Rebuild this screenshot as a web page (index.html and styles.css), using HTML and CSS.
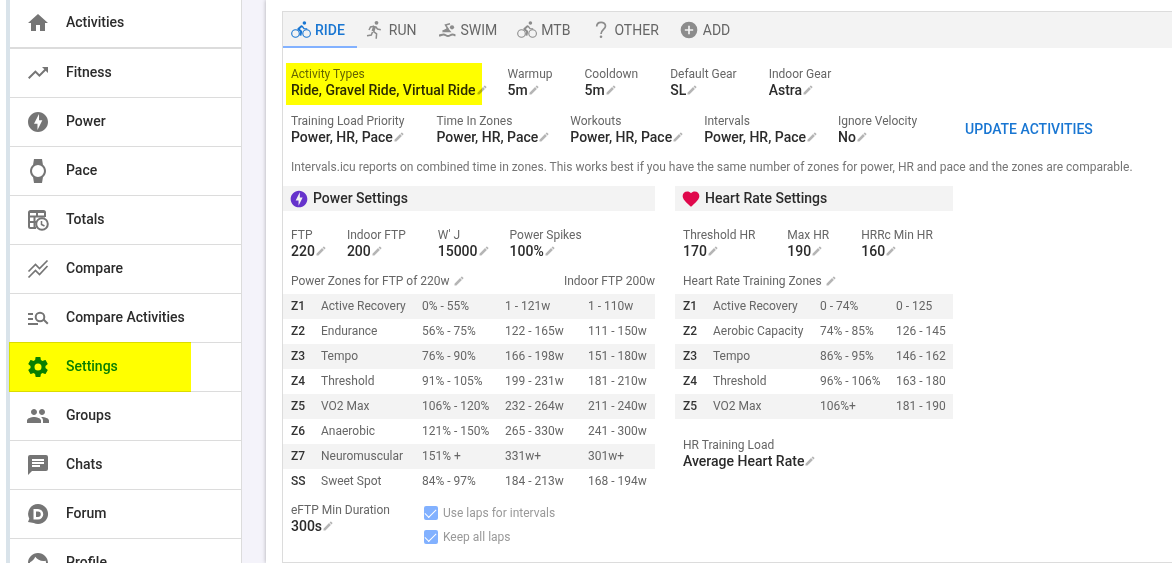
FILE: index.html
```html
<!DOCTYPE html>
<html lang="en">
<head>
<meta charset="utf-8">
<title>Settings</title>
<link rel="stylesheet" href="styles.css">
</head>
<body>
<svg class="sprite" aria-hidden="true">
  <symbol id="pencil" viewBox="0 0 24 24"><path d="M3,17.25V21H6.75L17.81,9.93L14.06,6.18L3,17.25M20.71,7.04C21.1,6.65 21.1,6 20.71,5.63L18.37,3.29C18,2.9 17.35,2.9 16.96,3.29L15.12,5.12L18.87,8.87L20.71,7.04Z"/></symbol>
  <symbol id="bolt" viewBox="0 0 24 24"><path d="M12 2C6.48 2 2 6.48 2 12s4.48 10 10 10 10-4.48 10-10S17.52 2 12 2zM11.48 20v-6.26H8L13 4v6.26h3.35z"/></symbol>
  <symbol id="bike" viewBox="0 0 20 20"><g fill="none" stroke="currentColor"><circle cx="4.5" cy="13.5" r="3.8" stroke-width="1.1"/><circle cx="15.6" cy="13.5" r="3.8" stroke-width="1.1"/><path d="M11 5.8 7.3 9l2.900 2.600-.8 4" stroke-width="2" stroke-linejoin="round"/><path d="M11 6l2 2.600 3.200.2" stroke-width="1.3"/></g><circle cx="13.4" cy="3" r="1.8"/></symbol>
</svg>
<div class="app">
  <nav class="sidebar" aria-label="Main">
    <a class="nav first" href="#"><svg class="nav-icon" viewBox="0 0 24 24"><path d="M10,20V14H14V20H19V12H22L12,3L2,12H5V20H10Z"/></svg>Activities</a>
    <a class="nav" href="#"><svg class="nav-icon" viewBox="0 0 24 24"><path d="M16,6L18.29,8.29L13.41,13.17L9.41,9.17L2,16.59L3.41,18L9.41,12L13.41,16L19.71,9.71L22,12V6H16Z"/></svg>Fitness</a>
    <a class="nav" href="#"><svg class="nav-icon"><use href="#bolt"/></svg>Power</a>
    <a class="nav" href="#"><svg class="nav-icon" viewBox="0 0 24 24"><path d="M6,12A6,6 0 0,1 12,6A6,6 0 0,1 18,12A6,6 0 0,1 12,18A6,6 0 0,1 6,12M20,12C20,9.45 18.81,7.19 16.95,5.73L16,0H8L7.05,5.73C5.19,7.19 4,9.45 4,12C4,14.54 5.19,16.81 7.05,18.27L8,24H16L16.95,18.27C18.81,16.81 20,14.54 20,12Z"/></svg>Pace</a>
    <a class="nav" href="#"><svg class="nav-icon line" viewBox="0 0 24 24"><path d="M10 20H4.5A1.5 1.5 0 0 1 3 18.500V4.500A1.500 1.500 0 0 1 4.500 3h13A1.500 1.500 0 0 1 19 4.500V9M3 4h16M3 8.500h16M3 14h7M8.500 8.500V20M11 4v5"/><circle cx="16" cy="16" r="5.800"/><path d="M15.500 13v3.500l3 1.500" stroke-width="1.500"/></svg>Totals</a>
    <a class="nav" href="#"><svg class="nav-icon line" viewBox="0 0 24 24"><path d="M2.500 14.500 9.500 7.500l4 4L21.500 3.500M2.500 20.500l7-7 4 4 8-8.500" stroke-width="1.700"/></svg>Compare</a>
    <a class="nav" href="#"><svg class="nav-icon line" viewBox="0 0 24 24"><path d="M2 8h5M2 13h5M2 18h10M17.500 13.500l4.300 4.300"/><circle cx="14" cy="11" r="4.300"/></svg>Compare Activities</a>
    <a class="nav active" href="#" aria-current="page"><svg class="nav-icon" viewBox="0 0 24 24"><path d="M12,15.5A3.5,3.5 0 0,1 8.5,12A3.5,3.5 0 0,1 12,8.5A3.5,3.5 0 0,1 15.5,12A3.5,3.5 0 0,1 12,15.5M19.43,12.97C19.47,12.65 19.5,12.33 19.5,12C19.5,11.67 19.47,11.34 19.43,11L21.54,9.37C21.73,9.22 21.78,8.95 21.66,8.73L19.66,5.27C19.54,5.05 19.27,4.96 19.05,5.05L16.56,6.05C16.04,5.66 15.5,5.32 14.87,5.07L14.5,2.42C14.46,2.18 14.25,2 14,2H10C9.75,2 9.54,2.18 9.5,2.42L9.13,5.07C8.5,5.32 7.96,5.66 7.44,6.05L4.95,5.05C4.73,4.96 4.46,5.05 4.34,5.27L2.34,8.73C2.21,8.95 2.27,9.22 2.46,9.37L4.57,11C4.53,11.34 4.5,11.67 4.5,12C4.5,12.33 4.53,12.65 4.57,12.97L2.46,14.63C2.27,14.78 2.21,15.05 2.34,15.27L4.34,18.73C4.46,18.95 4.73,19.03 4.95,18.95L7.44,17.94C7.96,18.34 8.5,18.68 9.13,18.93L9.5,21.58C9.54,21.82 9.75,22 10,22H14C14.25,22 14.46,21.82 14.5,21.58L14.87,18.93C15.5,18.67 16.04,18.34 16.56,17.94L19.05,18.95C19.27,19.03 19.54,18.95 19.66,18.73L21.66,15.27C21.78,15.05 21.73,14.78 21.54,14.63L19.43,12.97Z"/></svg>Settings</a>
    <a class="nav" href="#"><svg class="nav-icon" viewBox="0 0 24 24"><path d="M16 11c1.66 0 2.99-1.34 2.99-3S17.66 5 16 5c-1.66 0-3 1.34-3 3s1.34 3 3 3zm-8 0c1.66 0 2.99-1.34 2.99-3S9.66 5 8 5C6.34 5 5 6.34 5 8s1.34 3 3 3zm0 2c-2.33 0-7 1.17-7 3.500V19h14v-2.500c0-2.330-4.670-3.500-7-3.500zm8 0c-.29 0-.62.02-.97.05 1.160.84 1.970 1.970 1.970 3.450V19h6v-2.500c0-2.330-4.670-3.500-7-3.500z"/></svg>Groups</a>
    <a class="nav" href="#"><svg class="nav-icon" viewBox="0 0 24 24"><path d="M20 2H4a2 2 0 0 0-2 2v18l4-4h14a2 2 0 0 0 2-2V4a2 2 0 0 0-2-2zM6 9h12v2H6zm8 5H6v-2h8zm4-6H6V6h12z"/></svg>Chats</a>
    <a class="nav" href="#"><svg class="nav-icon" viewBox="0 0 24 24"><path fill-rule="evenodd" d="M12 2a10 10 0 1 1-4.300 19L2 20l1.300-3.200A10 10 0 0 1 12 2zM7.500 7v10.500H12a5.250 5.250 0 0 0 0-10.500zM10 9.500h2a2.750 2.750 0 0 1 0 5.500h-2z"/></svg>Forum</a>
    <a class="nav" href="#"><svg class="nav-icon" viewBox="0 0 24 24"><path d="M12 2C6.480 2 2 6.480 2 12s4.480 10 10 10 10-4.480 10-10S17.520 2 12 2zm0 18c-4.410 0-8-3.590-8-8 0-.29.02-.58.05-.86 2.360-1.050 4.230-2.980 5.210-5.370C11.070 8.330 14.050 10 17.420 10c.78 0 1.530-.09 2.250-.26.21.71.33 1.470.33 2.260 0 4.410-3.590 8-8 8z"/></svg>Profile</a>
  </nav>
  <main class="content">
    <section class="panel">
      <div class="tabs" role="tablist">
        <button class="tab selected" role="tab" aria-selected="true"><svg class="tab-icon"><use href="#bike"/></svg>RIDE</button>
        <button class="tab" role="tab"><svg class="tab-icon" viewBox="0 0 20 20"><circle cx="11.500" cy="2.800" r="1.900"/><path d="M9.700 6 8 11.300" fill="none" stroke="currentColor" stroke-width="3"/><path d="M9 6.200 5.500 7 4 10M10.500 6.500 12.500 9l3.300.7M8.300 11.300l3.300 2.500-.4 5M7.500 12l-1.200 3-4.300.7" fill="none" stroke="currentColor" stroke-width="1.500"/></svg>RUN</button>
        <button class="tab" role="tab"><svg class="tab-icon" viewBox="0 0 20 20"><circle cx="15" cy="7.300" r="2.100"/><path d="M13 3.800 8.500 5l2.500 4-5.500 2.300" fill="none" stroke="currentColor" stroke-width="1.500"/><path d="M10.500 7.500 14.500 12.300H5z"/><path d="M2 15.500c2 0 2.500-1 4.500-1s2.500 1.500 4.500 1.500 2.500-1.500 4.500-1.500 1.500.8 3 .8" fill="none" stroke="currentColor" stroke-width="2"/></svg>SWIM</button>
        <button class="tab" role="tab"><svg class="tab-icon"><use href="#bike"/></svg>MTB</button>
        <button class="tab" role="tab"><svg class="tab-icon" viewBox="0 0 20 20"><path d="M6.700 6.500C6.700 1 15.500 1 15.500 6c0 3.300-4.500 3.500-4.500 8" fill="none" stroke="currentColor" stroke-width="1.700"/><circle cx="11" cy="16.800" r="1.300"/></svg>OTHER</button>
        <button class="tab" role="tab"><svg class="tab-icon" viewBox="0 0 24 24"><path d="M12 2a10 10 0 1 0 0 20 10 10 0 0 0 0-20zm5 11h-4v4h-2v-4H7v-2h4V7h2v4h4z"/></svg>ADD</button>
      </div>
      <div class="body">
        <div class="fields">
          <div class="field marked"><span class="label">Activity Types</span><span class="value">Ride, Gravel Ride, Virtual Ride<button class="edit" aria-label="Edit activity types"><svg><use href="#pencil"/></svg></button></span></div>
          <div class="field"><span class="label">Warmup</span><span class="value">5m<button class="edit" aria-label="Edit warmup"><svg><use href="#pencil"/></svg></button></span></div>
          <div class="field"><span class="label">Cooldown</span><span class="value">5m<button class="edit" aria-label="Edit cooldown"><svg><use href="#pencil"/></svg></button></span></div>
          <div class="field"><span class="label">Default Gear</span><span class="value">SL<button class="edit" aria-label="Edit default gear"><svg><use href="#pencil"/></svg></button></span></div>
          <div class="field"><span class="label">Indoor Gear</span><span class="value">Astra<button class="edit" aria-label="Edit indoor gear"><svg><use href="#pencil"/></svg></button></span></div>
        </div>
        <div class="fields">
          <div class="field"><span class="label">Training Load Priority</span><span class="value">Power, HR, Pace<button class="edit" aria-label="Edit training load priority"><svg><use href="#pencil"/></svg></button></span></div>
          <div class="field"><span class="label">Time In Zones</span><span class="value">Power, HR, Pace<button class="edit" aria-label="Edit time in zones"><svg><use href="#pencil"/></svg></button></span></div>
          <div class="field"><span class="label">Workouts</span><span class="value">Power, HR, Pace<button class="edit" aria-label="Edit workouts"><svg><use href="#pencil"/></svg></button></span></div>
          <div class="field"><span class="label">Intervals</span><span class="value">Power, HR, Pace<button class="edit" aria-label="Edit intervals"><svg><use href="#pencil"/></svg></button></span></div>
          <div class="field"><span class="label">Ignore Velocity</span><span class="value">No<button class="edit" aria-label="Edit ignore velocity"><svg><use href="#pencil"/></svg></button></span></div>
          <button class="update">UPDATE ACTIVITIES</button>
        </div>
        <p class="note">Intervals.icu reports on combined time in zones. This works best if you have the same number of zones for power, HR and pace and the zones are comparable.</p>
      </div>
      <div class="groups">
        <section class="group power">
          <h2 class="heading"><svg class="heading-icon violet"><use href="#bolt"/></svg>Power Settings</h2>
          <div class="fields inset">
            <div class="field"><span class="label">FTP</span><span class="value">220<button class="edit" aria-label="Edit FTP"><svg><use href="#pencil"/></svg></button></span></div>
            <div class="field"><span class="label">Indoor FTP</span><span class="value">200<button class="edit" aria-label="Edit indoor FTP"><svg><use href="#pencil"/></svg></button></span></div>
            <div class="field"><span class="label">W' J</span><span class="value">15000<button class="edit" aria-label="Edit W prime"><svg><use href="#pencil"/></svg></button></span></div>
            <div class="field"><span class="label">Power Spikes</span><span class="value">100%<button class="edit" aria-label="Edit power spikes"><svg><use href="#pencil"/></svg></button></span></div>
          </div>
          <div class="zones-title"><span>Power Zones for FTP of 220w<button class="edit spaced" aria-label="Edit power zones"><svg><use href="#pencil"/></svg></button></span><span>Indoor FTP 200w</span></div>
          <table class="zones">
            <colgroup><col class="c-id"><col class="c-name"><col class="c-pct"><col class="c-watts"><col></colgroup>
            <tbody>
            <tr><th scope="row">Z1</th><td>Active Recovery</td><td>0% - 55%</td><td>1 - 121w</td><td>1 - 110w</td></tr>
            <tr><th scope="row">Z2</th><td>Endurance</td><td>56% - 75%</td><td>122 - 165w</td><td>111 - 150w</td></tr>
            <tr><th scope="row">Z3</th><td>Tempo</td><td>76% - 90%</td><td>166 - 198w</td><td>151 - 180w</td></tr>
            <tr><th scope="row">Z4</th><td>Threshold</td><td>91% - 105%</td><td>199 - 231w</td><td>181 - 210w</td></tr>
            <tr><th scope="row">Z5</th><td>VO2 Max</td><td>106% - 120%</td><td>232 - 264w</td><td>211 - 240w</td></tr>
            <tr><th scope="row">Z6</th><td>Anaerobic</td><td>121% - 150%</td><td>265 - 330w</td><td>241 - 300w</td></tr>
            <tr><th scope="row">Z7</th><td>Neuromuscular</td><td>151% +</td><td>331w+</td><td>301w+</td></tr>
            <tr><th scope="row">SS</th><td>Sweet Spot</td><td>84% - 97%</td><td>184 - 213w</td><td>168 - 194w</td></tr>
            </tbody>
          </table>
          <div class="fields footer">
            <div class="field"><span class="label">eFTP Min Duration</span><span class="value">300s<button class="edit" aria-label="Edit eFTP min duration"><svg><use href="#pencil"/></svg></button></span></div>
            <div class="checks">
              <label class="check"><input type="checkbox" checked>Use laps for intervals</label>
              <label class="check"><input type="checkbox" checked>Keep all laps</label>
            </div>
          </div>
        </section>
        <section class="group heart">
          <h2 class="heading"><svg class="heading-icon red" viewBox="0 0 24 24"><path d="M12,21.35L10.55,20.03C5.4,15.36 2,12.27 2,8.5C2,5.41 4.42,3 7.5,3C9.24,3 10.91,3.81 12,5.08C13.09,3.81 14.76,3 16.5,3C19.58,3 22,5.41 22,8.5C22,12.27 18.6,15.36 13.45,20.03L12,21.35Z"/></svg>Heart Rate Settings</h2>
          <div class="fields inset">
            <div class="field"><span class="label">Threshold HR</span><span class="value">170<button class="edit" aria-label="Edit threshold HR"><svg><use href="#pencil"/></svg></button></span></div>
            <div class="field"><span class="label">Max HR</span><span class="value">190<button class="edit" aria-label="Edit max HR"><svg><use href="#pencil"/></svg></button></span></div>
            <div class="field"><span class="label">HRRc Min HR</span><span class="value">160<button class="edit" aria-label="Edit HRRc min HR"><svg><use href="#pencil"/></svg></button></span></div>
          </div>
          <div class="zones-title"><span>Heart Rate Training Zones<button class="edit spaced" aria-label="Edit heart rate zones"><svg><use href="#pencil"/></svg></button></span></div>
          <table class="zones">
            <colgroup><col class="c-id"><col class="c-name-wide"><col class="c-pct-narrow"><col></colgroup>
            <tbody>
            <tr><th scope="row">Z1</th><td>Active Recovery</td><td>0 - 74%</td><td>0 - 125</td></tr>
            <tr><th scope="row">Z2</th><td>Aerobic Capacity</td><td>74% - 85%</td><td>126 - 145</td></tr>
            <tr><th scope="row">Z3</th><td>Tempo</td><td>86% - 95%</td><td>146 - 162</td></tr>
            <tr><th scope="row">Z4</th><td>Threshold</td><td>96% - 106%</td><td>163 - 180</td></tr>
            <tr><th scope="row">Z5</th><td>VO2 Max</td><td>106%+</td><td>181 - 190</td></tr>
            </tbody>
          </table>
          <div class="fields load">
            <div class="field"><span class="label">HR Training Load</span><span class="value">Average Heart Rate<button class="edit" aria-label="Edit HR training load"><svg><use href="#pencil"/></svg></button></span></div>
          </div>
        </section>
      </div>
    </section>
  </main>
</div>
</body>
</html>
```

FILE: styles.css
```css
* { box-sizing: border-box; }

body {
  margin: 0;
  background: #f4f3fa;
  color: #2b2b2b;
  font-family: Roboto, "Liberation Sans", sans-serif;
  font-size: 14px;
  line-height: 16px;
}

button {
  border: 0;
  padding: 0;
  background: none;
  color: inherit;
  font: inherit;
  cursor: pointer;
}

svg { fill: currentColor; flex: none; }
.sprite { display: none; }

.app {
  display: flex;
  gap: 24px;
  height: 100vh;
  overflow: hidden;
  border-left: 6px solid #fff;
}

.sidebar {
  flex: 0 0 236px;
  border-left: 4px solid #d9e3ea;
  border-right: 1px solid #dcdcdc;
  background: #fff;
}

.nav {
  position: relative;
  display: flex;
  align-items: center;
  gap: 16px;
  height: 49px;
  padding: 0 16px 2px;
  border-bottom: 1px solid #dcdcdc;
  color: #2b2b2b;
  font-weight: 500;
  text-decoration: none;
}
.nav.first { border-bottom-width: 2px; padding-bottom: 4px; }
.nav-icon { width: 24px; height: 24px; margin-top: 2px; color: #757575; }
.nav-icon.line { fill: none; stroke: currentColor; stroke-width: 2; }

.active, .active .nav-icon { color: #087f00; }
.active::before {
  content: "";
  position: absolute;
  inset: -1px 50px -1px -1px;
  background: #ff0;
  mix-blend-mode: multiply;
}

.content {
  flex: 1;
  min-width: 0;
  padding: 11px 0 0 16px;
  background: #fff;
  box-shadow: 0 0 4px rgba(0, 0, 0, .3);
}

.panel {
  border: 1px solid #dcdcdc;
  border-right: 0;
}

.tabs { display: flex; height: 36px; background: #f3f3f3; }
.tab {
  display: flex;
  align-items: center;
  gap: 4px;
  padding: 0 12px 0 8px;
  border-bottom: 2px solid transparent;
  border-top: 2px solid transparent;
  color: #666;
}
.tab-icon { width: 20px; height: 20px; color: #8c8c8c; }
.selected { border-bottom-color: #82b1ff; font-weight: 500; }
.selected, .selected .tab-icon { color: #1976d2; }

.body { padding: 18px 8px 0; }
.fields { display: flex; gap: 32px; margin-bottom: 15px; }
.field { position: relative; display: flex; flex-direction: column; }
.label { color: #666; font-size: 12px; }
.value { display: flex; align-items: center; font-weight: 500; }
.edit {
  display: flex;
  width: 12px;
  height: 12px;
  margin-right: -12px;
  color: #b5b5b5;
}
.edit svg { width: 12px; height: 12px; }
.spaced { margin-left: 3px; }

.marked::before {
  content: "";
  position: absolute;
  inset: -3px -6px -7px -5px;
  z-index: 1;
  background: #ff0;
  mix-blend-mode: multiply;
  pointer-events: none;
}

.update { padding: 0 16px; color: #1976d2; font-weight: 500; }
.note { margin: -1px 0 11px; color: #757575; font-size: 12px; }

.groups { display: flex; align-items: flex-start; gap: 20px; }
.power { flex: 0 0 372px; }
.heart { flex: 0 0 278px; }
.heading {
  display: flex;
  align-items: center;
  gap: 4px;
  height: 25px;
  margin: 0 0 16px;
  padding: 0 6px 2px;
  background: #f3f3f3;
  font-size: 14px;
  font-weight: 500;
}
.heading-icon { width: 20px; height: 20px; margin-top: 2px; }
.violet { color: #6633cc; }
.red { color: #e0084c; }
.inset { padding: 0 8px; margin-bottom: 14px; }
.zones-title {
  display: flex;
  justify-content: space-between;
  margin-bottom: 5px;
  padding-left: 8px;
  color: #666;
  font-size: 12px;
}
.zones-title span { display: flex; align-items: center; }

.zones {
  width: 100%;
  border-collapse: collapse;
  table-layout: fixed;
  color: #666;
  font-size: 12px;
}
.zones th, .zones td {
  height: 25px;
  padding: 0 0 2px 8px;
  text-align: left;
  white-space: nowrap;
}
.zones th { color: #333; font-weight: 500; }
.zones tr:nth-child(odd) { background: #f3f3f3; }
.c-id { width: 30px; }
.c-name { width: 101px; }
.c-name-wide { width: 107px; }
.c-pct, .c-watts { width: 83px; }
.c-pct-narrow { width: 76px; }

.footer { margin: 8px 0 17px; padding: 0 8px; }
.checks { display: flex; flex-direction: column; gap: 8px; padding: 3px 0 0 2px; }
.check { display: flex; align-items: center; gap: 5px; color: #999; font-size: 12px; }
.check input {
  display: grid;
  place-items: center;
  appearance: none;
  width: 14px;
  height: 14px;
  margin: 0;
  border-radius: 2px;
  background: #82b1ff;
}
.check input::before {
  content: "";
  width: 10px;
  height: 5px;
  border: solid #fff;
  border-width: 0 0 1px 1px;
  transform: translateY(-1px) rotate(-45deg);
}
.load { margin: 18px 0 0; padding: 0 8px; }
```
